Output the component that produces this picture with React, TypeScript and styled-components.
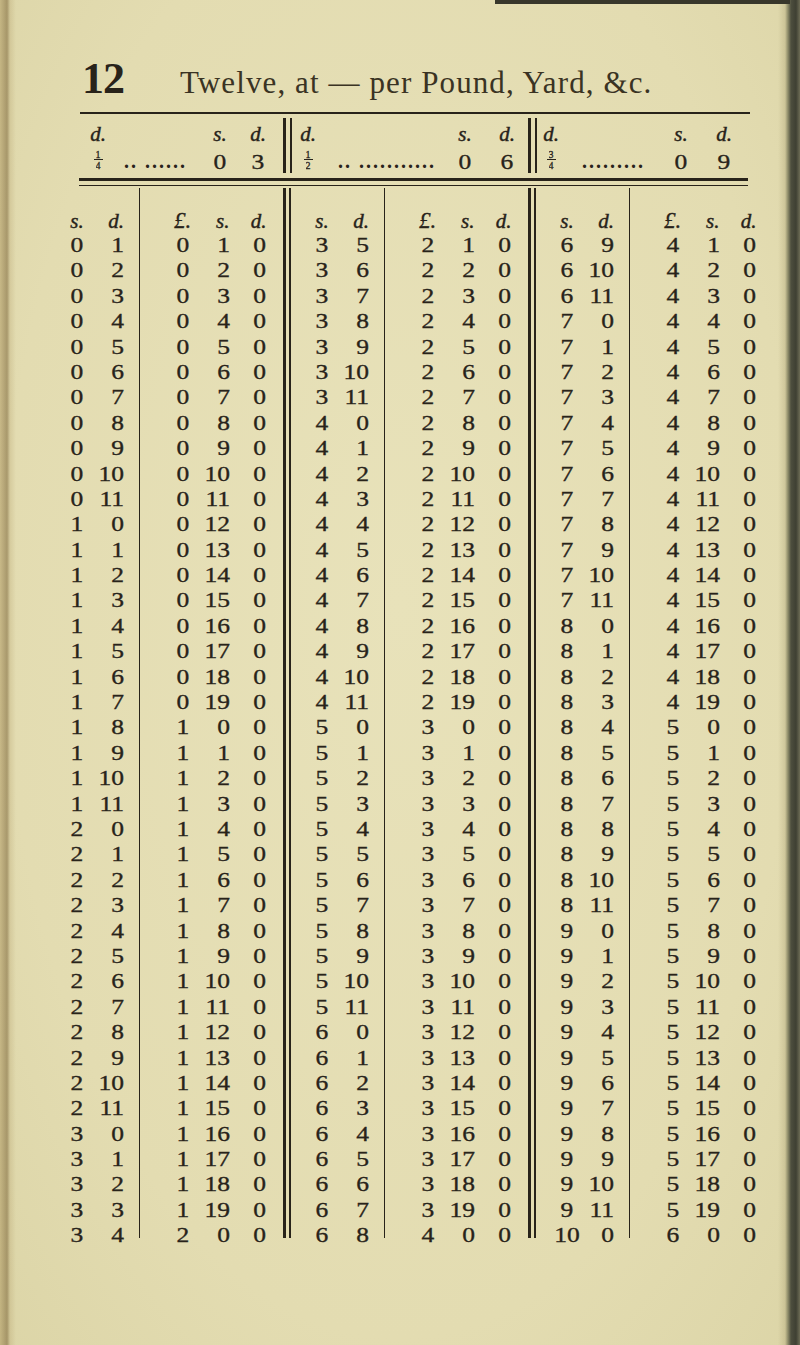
import { Fragment } from 'react';
import styled, { createGlobalStyle } from 'styled-components';

const INK = '#28231a';
const SERIF = '"Liberation Serif", "Times New Roman", serif';

type Align = 'left' | 'center' | 'right';

interface IRow {
  ps: number;
  pd: number;
  tl: number;
  ts: number;
  td: number;
}

interface IMini {
  num: string;
  den: string;
  dots: string;
  s: number;
  d: number;
  width: number;
  padL: number;
  padR: number;
  gap: number;
}

// price in pence runs from `from` for 40 rows; twelve of them cost the same in shillings
const makeRows = (from: number): IRow[] =>
  Array.from({ length: 40 }, (_, k) => {
    const pence = from + k;
    return {
      ps: Math.floor(pence / 12),
      pd: pence % 12,
      tl: Math.floor(pence / 20),
      ts: pence % 20,
      td: 0,
    };
  });

const GROUPS = [makeRows(1), makeRows(41), makeRows(81)];

const MINIS: IMini[] = [
  { num: '1', den: '4', dots: '.. ......', s: 0, d: 3, width: 204, padL: 5, padR: 12, gap: 12 },
  { num: '1', den: '2', dots: '.. ...........', s: 0, d: 6, width: 236, padL: 2, padR: 15, gap: 16 },
  { num: '3', den: '4', dots: '.........', s: 0, d: 9, width: 213, padL: 0, padR: 13, gap: 17 },
];

const GlobalStyle = createGlobalStyle`
  html, body {
    margin: 0;
    padding: 0;
    background: #e4deb3;
  }
`;

const App = () => {
  return (
    <>
      <GlobalStyle />
      <Page>
        <Header>
          <PageNo>12</PageNo>
          <Title>Twelve, at — per Pound, Yard, &amp;c.</Title>
        </Header>
        <Rule />
        <MiniTable>
          {MINIS.map((m, i) => (
            <Fragment key={i}>
              <MiniGroup $width={m.width} $padL={m.padL} $padR={m.padR} $gap={m.gap}>
                <HeadCell $align="center">d.</HeadCell>
                <span />
                <HeadCell $align="center">s.</HeadCell>
                <HeadCell $align="center">d.</HeadCell>
                <Fraction>
                  <FracPart>{m.num}</FracPart>
                  <FracBar />
                  <FracPart>{m.den}</FracPart>
                </Fraction>
                <Dots>{m.dots}</Dots>
                <MiniNum $align="center">{m.s}</MiniNum>
                <MiniNum $align="center">{m.d}</MiniNum>
              </MiniGroup>
              {i < MINIS.length - 1 && <MiniBar />}
            </Fragment>
          ))}
        </MiniTable>
        <DoubleRule />
        <Table>
          {GROUPS.map((rows, i) => (
            <Fragment key={i}>
              <Group>
                <PriceBlock>
                  <HeadCell $align="center">s.</HeadCell>
                  <HeadCell $align="right">d.</HeadCell>
                  {rows.map((r, k) => (
                    <Fragment key={k}>
                      <Num $align="center">{r.ps}</Num>
                      <Num $align="right">{r.pd}</Num>
                    </Fragment>
                  ))}
                </PriceBlock>
                <TotalBlock>
                  <Pound>£.</Pound>
                  <HeadCell $align="right">s.</HeadCell>
                  <HeadCell $align="right">d.</HeadCell>
                  {rows.map((r, k) => (
                    <Fragment key={k}>
                      <Num $align="center">{r.tl}</Num>
                      <Num $align="right">{r.ts}</Num>
                      <Num $align="right">{r.td}</Num>
                    </Fragment>
                  ))}
                </TotalBlock>
              </Group>
              {i < GROUPS.length - 1 && <DoubleBar />}
            </Fragment>
          ))}
        </Table>
      </Page>
    </>
  );
};

const Page = styled.div`
  box-sizing: border-box;
  width: 800px;
  min-height: 1345px;
  padding: 57px 0 0 79px;
  font-family: ${SERIF};
  color: ${INK};
  background:
    linear-gradient(#38372b, #38372b) right 10px top 0 / 295px 4px no-repeat,
    linear-gradient(
      to left,
      #6d6c55 0,
      #3f4033 4px,
      #4d4e3e 9px,
      #8c8a68 12px,
      rgba(170, 160, 115, 0.35) 15px,
      transparent 22px
    ),
    linear-gradient(
      to right,
      rgba(150, 120, 60, 0.35) 0,
      rgba(110, 85, 40, 0.5) 7px,
      rgba(160, 135, 80, 0.2) 10px,
      transparent 16px
    ),
    radial-gradient(ellipse at 50% 45%, #e8e2ba 0, #e3dcb1 70%, #dcd5a7 100%);
`;

const Header = styled.div`
  display: flex;
  align-items: baseline;
  height: 44px;
  padding-left: 3px;
`;

const PageNo = styled.span`
  width: 98px;
  font-size: 44px;
  line-height: 44px;
  font-weight: bold;
  letter-spacing: -1px;
`;

const Title = styled.span`
  font-size: 31px;
  line-height: 44px;
  letter-spacing: 1.1px;
  color: #3a3323;
`;

const Rule = styled.div`
  width: 670px;
  height: 2px;
  margin: 11px 0 0 1px;
  background: ${INK};
`;

const MiniTable = styled.div`
  display: flex;
  height: 55px;
  margin-top: 4px;
`;

const MiniGroup = styled.div<{ $width: number; $padL: number; $padR: number; $gap: number }>`
  box-sizing: border-box;
  width: ${(p) => p.$width}px;
  padding: 0 ${(p) => p.$padR}px 0 ${(p) => p.$padL}px;
  display: grid;
  grid-template-columns: 28px 1fr 26px 26px;
  grid-template-rows: 32px 23px;
  column-gap: ${(p) => p.$gap}px;
`;

const MiniBar = styled.div`
  box-sizing: border-box;
  width: 9px;
  border-left: 3px solid ${INK};
  border-right: 2px solid ${INK};
`;

const DoubleRule = styled.div`
  box-sizing: border-box;
  width: 669px;
  height: 8px;
  margin-top: 5px;
  border-top: 3.5px solid ${INK};
  border-bottom: 1.5px solid ${INK};
`;

const Fraction = styled.span`
  display: inline-flex;
  flex-direction: column;
  align-items: center;
  justify-self: center;
  align-self: center;
  margin-top: -3px;
`;

const FracPart = styled.span`
  display: block;
  font-size: 10px;
  line-height: 9px;
  height: 9px;
  overflow: hidden;
  -webkit-text-stroke: 0.3px ${INK};
`;

const FracBar = styled.span`
  width: 9px;
  height: 1px;
  background: ${INK};
  margin: 0 0 1px;
`;

const Dots = styled.span`
  font-size: 20px;
  line-height: 23px;
  letter-spacing: 2px;
  white-space: pre;
  font-weight: bold;
`;

const Table = styled.div`
  display: flex;
  height: 1050px;
  margin: 2px 0 0 -15px;
`;

const Group = styled.div`
  display: flex;
  padding-right: 10px;
`;

const PriceBlock = styled.div`
  box-sizing: border-box;
  width: 75.5px;
  padding: 22px 14px 0 0;
  border-right: 1.5px solid ${INK};
  display: grid;
  grid-template-columns: 26px 34px;
  grid-template-rows: 22px;
  grid-auto-rows: 25.4px;
`;

const TotalBlock = styled.div`
  padding: 22px 0 0 30px;
  display: grid;
  grid-template-columns: 26px 34px 43px;
  grid-template-rows: 22px;
  grid-auto-rows: 25.4px;
  & > :nth-child(3n) {
    padding-right: 6px;
  }
`;

const DoubleBar = styled.div`
  box-sizing: border-box;
  width: 8.5px;
  margin-right: 18px;
  border-left: 3px solid ${INK};
  border-right: 2px solid ${INK};
`;

const HeadCell = styled.span<{ $align: Align }>`
  display: block;
  font-style: italic;
  font-size: 21px;
  line-height: 22px;
  text-align: ${(p) => p.$align};
  align-self: center;
  -webkit-text-stroke: 0.4px ${INK};
`;

const Pound = styled.span`
  display: block;
  font-style: italic;
  font-size: 23px;
  line-height: 22px;
  text-align: center;
  -webkit-text-stroke: 0.3px ${INK};
`;

const Num = styled.span<{ $align: Align }>`
  display: block;
  font-size: 22px;
  line-height: 25.4px;
  text-align: ${(p) => p.$align};
  transform: scaleX(1.16);
  transform-origin: ${(p) => p.$align};
  -webkit-text-stroke: 0.35px ${INK};
`;

const MiniNum = styled(Num)`
  line-height: 23px;
`;

export default App;
